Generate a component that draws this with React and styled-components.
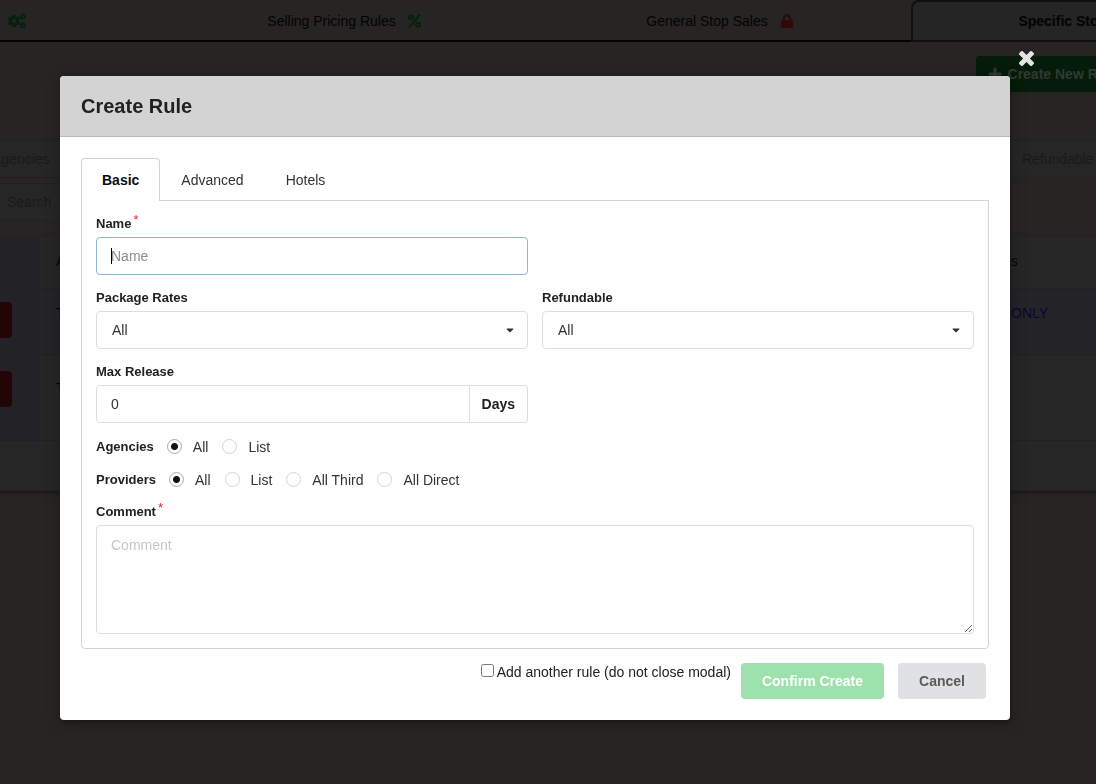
import React, { useState } from "react";
import styled, { createGlobalStyle } from "styled-components";
import { FaCaretDown, FaCogs, FaLock } from "react-icons/fa";

const GlobalStyle = createGlobalStyle`
  * {
    box-sizing: border-box;
  }

  body {
    margin: 0;
    background: #272523;
    color: #212121;
    font-family: "Liberation Sans", Arial, sans-serif;
    font-size: 14px;
    line-height: 18px;
  }

  button, input, select, textarea {
    font: inherit;
    color: inherit;
  }
`;

const Backdrop = styled.div`
  height: 100vh;
  overflow: hidden;
`;

const Page = styled.main`
  margin: 0 -34px 0 -24px;
  color: #030303;
`;

const PageTabs = styled.nav`
  display: flex;
  height: 42px;
  border-bottom: 2px solid #040404;
`;

const PageTab = styled.a`
  display: flex;
  flex: 0 0 ${(props) => (props.$first ? "183px" : "376px")};
  align-items: center;
  justify-content: ${(props) => (props.$first ? "flex-start" : "center")};
  gap: 12px;
  height: 42px;
  padding: 0 6px 0 ${(props) => (props.$first ? "30px" : "0")};
  color: inherit;
  font-weight: ${(props) => (props.$active ? "700" : "400")};
  text-decoration: none;
  white-space: nowrap;
  border: 2px solid ${(props) => (props.$active ? "#101010" : "transparent")};
  border-radius: 8px 8px 0 0;
  background: ${(props) => (props.$active ? "#252525" : "transparent")};

  svg {
    color: ${(props) => props.$icon};
  }
`;

const PageActions = styled.div`
  display: flex;
  justify-content: flex-end;
  padding: 14px 0 48px;
`;

const CreateButton = styled.button`
  display: flex;
  align-items: center;
  gap: 6px;
  height: 36px;
  padding: 0 12px;
  border: 0;
  border-radius: 4px;
  background: #051c0a;
  color: #2f3a31;
  font-weight: 700;
  white-space: nowrap;
`;

const Filters = styled.div`
  display: flex;
  gap: 14px;
  padding-left: ${(props) => (props.$inset ? "15px" : "0")};
  margin-bottom: ${(props) => (props.$inset ? "16px" : "5px")};
`;

const Filter = styled.input`
  flex: ${(props) => props.$flex};
  min-width: 0;
  height: 38px;
  padding: 0 15px;
  border: 1px solid #222120;
  border-radius: 4px;
  background: #262626;

  &::placeholder {
    color: #1a1a1a;
    opacity: 1;
  }
`;

const RuleTable = styled.table`
  width: 100%;
  table-layout: fixed;
  border-collapse: collapse;
  background: #262626;
  box-shadow: 0 2px 4px #1a1918;

  th, td {
    border-bottom: 1px solid #212121;
    font-weight: 400;
    text-align: left;
    vertical-align: top;
  }
`;

const RuleRow = styled.tr`
  height: ${(props) => props.$height};
  background: ${(props) => (props.$tinted ? "#242428" : "transparent")};

  th, td {
    padding: ${(props) => props.$pad || "15px"} 16px 0;
  }
`;

const HeadCell = styled.th`
  width: ${(props) => props.$width || "auto"};
  background: ${(props) => (props.$actions ? "#232327" : "transparent")};
`;

const NoteCell = styled.td`
  && {
    padding-left: 24px;
  }

  color: #070733;
`;

const ActionCell = styled.td`
  && {
    padding: ${(props) => props.$top} 0 0;
  }

  background: #232327;
`;

const DeleteButton = styled.button`
  display: block;
  width: 36px;
  height: 36px;
  border: 0;
  border-radius: 4px;
  background: #230505;
`;

const Overlay = styled.div`
  position: fixed;
  inset: 0;
  overflow: auto;
  padding: 76px 86px 64px 60px;
`;

const Modal = styled.section`
  position: relative;
  border-radius: 4px;
  background: #fff;
  box-shadow: 1px 3px 3px 0 rgba(0, 0, 0, 0.2), 1px 3px 15px 2px rgba(0, 0, 0, 0.2);
`;

const CloseButton = styled.button`
  position: absolute;
  top: -25px;
  right: -24px;
  display: flex;
  padding: 0;
  border: 0;
  background: none;
  color: #e4e4e4;
`;

const ModalHeader = styled.h2`
  margin: 0;
  padding: 18px 21px;
  border-bottom: 1px solid #b8b8b8;
  border-radius: 4px 4px 0 0;
  background: #d3d3d3;
  font-size: 20px;
  line-height: 24px;
`;

const ModalBody = styled.form`
  padding: 21px;
`;

const Tabs = styled.div`
  display: flex;
`;

const Tab = styled.button`
  height: 43px;
  margin-bottom: -1px;
  padding: 0 20px;
  border: 1px solid ${(props) => (props.$active ? "#d4d4d5" : "transparent")};
  border-bottom: 0;
  border-radius: 4px 4px 0 0;
  background: ${(props) => (props.$active ? "#fff" : "transparent")};
  color: ${(props) => (props.$active ? "#0d0d0d" : "#333")};
  font-weight: ${(props) => (props.$active ? "700" : "400")};
  z-index: 1;
`;

const Panel = styled.div`
  display: grid;
  grid-template-columns: 1fr 1fr;
  gap: 14px;
  padding: 14px;
  border: 1px solid #d4d4d5;
  border-radius: 0 0 4px 4px;
`;

const Field = styled.div`
  display: flex;
  flex-direction: column;
  gap: 4px;
  grid-column: ${(props) => props.$column || "1"};
`;

const FieldLabel = styled.label`
  display: flex;
  gap: 2px;
  font-size: 13px;
  font-weight: 700;
`;

const Required = styled.span`
  color: #db2828;
  font-weight: 400;
  line-height: 10px;
`;

const TextInput = styled.input`
  flex: 1;
  width: 100%;
  min-width: 0;
  min-height: 38px;
  padding: 0 14px;
  border: 1px solid #dededf;
  border-radius: ${(props) => (props.$labeled ? "4px 0 0 4px" : "4px")};
  background: #fff;
  color: #333;
  outline: 0;

  &::placeholder {
    color: #c7c7c7;
    opacity: 1;
  }

  &:focus {
    border-color: #85b7d9;
  }

  &:focus::placeholder {
    color: #8c8c8c;
  }

  /* steady caret while the focused box is still empty */
  &:focus:placeholder-shown {
    background: linear-gradient(#000, #000) 14px 50% / 1px 16px no-repeat #fff;
    caret-color: transparent;
  }
`;

const LabeledInput = styled.div`
  display: flex;
`;

const Unit = styled.span`
  display: flex;
  align-items: center;
  padding: 0 12px;
  border: 1px solid #dededf;
  border-left: 0;
  border-radius: 0 4px 4px 0;
  font-weight: 700;
`;

const SelectBox = styled.div`
  position: relative;

  svg {
    position: absolute;
    top: 13px;
    right: 12px;
    color: #333;
    pointer-events: none;
  }
`;

const Select = styled.select`
  appearance: none;
  width: 100%;
  height: 38px;
  padding: 0 15px;
  border: 1px solid #dededf;
  border-radius: 4px;
  background: #fff;
  color: #333;
  outline: 0;
`;

const RadioRow = styled.fieldset`
  grid-column: 1 / -1;
  display: flex;
  align-items: center;
  gap: 14px;
  height: 19px;
  margin: 0;
  padding: 0;
  border: 0;
`;

const RadioTitle = styled.span`
  margin-right: -1px;
  font-size: 13px;
  font-weight: 700;
`;

const RadioLabel = styled.label`
  display: flex;
  align-items: center;
  gap: 11px;
  color: #333;
`;

const Radio = styled.input`
  appearance: none;
  width: 15px;
  height: 15px;
  margin: 0;
  border: 1px solid #d4d4d5;
  border-radius: 50%;
  background: #fff;

  &:checked {
    border-color: #aaa;
    background: radial-gradient(circle, #111 3px, #fff 4px);
  }
`;

const TextArea = styled.textarea`
  display: block;
  width: 100%;
  height: 109px;
  padding: 10px 14px;
  border: 1px solid #dededf;
  border-radius: 4px;
  outline: 0;
  resize: vertical;

  &::placeholder {
    color: #c7c7c7;
    opacity: 1;
  }
`;

const Footer = styled.div`
  display: flex;
  justify-content: flex-end;
  gap: 14px;
  padding: 14px 3px 0 0;
`;

const AddAnother = styled.label`
  display: flex;
  align-self: flex-start;
  gap: 3px;
  margin-right: -4px;

  input {
    width: 13px;
    height: 13px;
    margin: 1px 0;
  }
`;

const Button = styled.button`
  height: 36px;
  padding: 0 21px;
  border: 0;
  border-radius: 4px;
  background: ${(props) => (props.$primary ? "#9de1ac" : "#e0e1e2")};
  color: ${(props) => (props.$primary ? "#fff" : "#5a5a5a")};
  font-weight: 700;
`;

const CloseIcon = () => (
  <svg width="15" height="15" viewBox="110 366 1188 1188" fill="currentColor">
    <path d="M1298 1322q0 40-28 68l-136 136q-28 28-68 28t-68-28l-294-294-294 294q-28 28-68 28t-68-28l-136-136q-28-28-28-68t28-68l294-294-294-294q-28-28-28-68t28-68l136-136q28-28 68-28t68 28l294 294 294-294q28-28 68-28t68 28l136 136q28 28 28 68t-28 68l-294 294 294 294q28 28 28 68z" />
  </svg>
);

const PercentIcon = () => (
  <svg width="13" height="14" viewBox="0 0 13 14" fill="none" stroke="currentColor" strokeWidth="2">
    <circle cx="3" cy="3.5" r="2" />
    <circle cx="10" cy="10.5" r="2" />
    <path d="M11.3 1.2L1.7 12.8" strokeLinecap="round" />
  </svg>
);

const PlusIcon = () => (
  <svg width="14" height="14" viewBox="0 0 14 14" stroke="currentColor" strokeWidth="3">
    <path d="M7 2v10M2 7h10" strokeLinecap="round" />
  </svg>
);

const RulesPage = () => (
  <Page>
    <PageTabs>
      <PageTab href="#markups" $first $icon="#05200d" aria-label="Markups">
        <FaCogs size={18} />
      </PageTab>
      <PageTab href="#selling" $icon="#05200d">
        Selling Pricing Rules <PercentIcon />
      </PageTab>
      <PageTab href="#general" $icon="#300808">
        General Stop Sales <FaLock size={14} />
      </PageTab>
      <PageTab href="#specific" $active $icon="#300808">
        Specific Stop Sales <FaLock size={14} />
      </PageTab>
    </PageTabs>
    <PageActions>
      <CreateButton type="button">
        <PlusIcon />
        Create New Rule
      </CreateButton>
    </PageActions>
    <Filters>
      <Filter $flex="1" placeholder="Agencies" aria-label="Agencies" />
      <Filter $flex="0 0 124px" placeholder="Refundable" aria-label="Refundable" />
    </Filters>
    <Filters $inset>
      <Filter $flex="0 0 50%" placeholder="Search" aria-label="Search" />
    </Filters>
    <RuleTable>
      <thead>
        <RuleRow $height="51px">
          <HeadCell $width="64px" $actions />
          <HeadCell>A</HeadCell>
          <HeadCell $width="143px">ns</HeadCell>
        </RuleRow>
      </thead>
      <tbody>
        <RuleRow $height="66px" $tinted>
          <ActionCell $top="13px">
            <DeleteButton type="button" aria-label="Delete" />
          </ActionCell>
          <td>T</td>
          <NoteCell>ONLY</NoteCell>
        </RuleRow>
        <RuleRow $height="86px" $pad="24px">
          <ActionCell $top="16px">
            <DeleteButton type="button" aria-label="Delete" />
          </ActionCell>
          <td>T</td>
          <td />
        </RuleRow>
      </tbody>
      <tfoot>
        <RuleRow $height="50px">
          <td colSpan={3} />
        </RuleRow>
      </tfoot>
    </RuleTable>
  </Page>
);

const SelectField = ({ id, label, column }) => (
  <Field $column={column}>
    <FieldLabel htmlFor={id}>{label}</FieldLabel>
    <SelectBox>
      <Select id={id} defaultValue="all">
        <option value="all">All</option>
        <option value="yes">Yes</option>
        <option value="no">No</option>
      </Select>
      <FaCaretDown size={12} />
    </SelectBox>
  </Field>
);

const RadioGroup = ({ name, title, options }) => {
  const [value, setValue] = useState("All");

  return (
    <RadioRow aria-label={title}>
      <RadioTitle>{title}</RadioTitle>
      {options.map((option) => (
        <RadioLabel key={option}>
          <Radio
            type="radio"
            name={name}
            checked={value === option}
            onChange={() => setValue(option)}
          />
          {option}
        </RadioLabel>
      ))}
    </RadioRow>
  );
};

const App = () => {
  const [tab, setTab] = useState("Basic");

  return (
    <>
      <GlobalStyle />
      <Backdrop>
        <RulesPage />
      </Backdrop>
      <Overlay>
        <Modal role="dialog" aria-labelledby="modal-title">
          <CloseButton type="button" aria-label="Close">
            <CloseIcon />
          </CloseButton>
          <ModalHeader id="modal-title">Create Rule</ModalHeader>
          <ModalBody onSubmit={(e) => e.preventDefault()}>
            <Tabs role="tablist">
              {["Basic", "Advanced", "Hotels"].map((name) => (
                <Tab
                  key={name}
                  type="button"
                  role="tab"
                  aria-selected={tab === name}
                  $active={tab === name}
                  onClick={() => setTab(name)}
                >
                  {name}
                </Tab>
              ))}
            </Tabs>
            <Panel>
              <Field>
                <FieldLabel htmlFor="name">
                  Name<Required>*</Required>
                </FieldLabel>
                <TextInput id="name" placeholder="Name" autoComplete="off" autoFocus />
              </Field>
              <SelectField id="package" label="Package Rates" />
              <SelectField id="refundable" label="Refundable" column="2" />
              <Field>
                <FieldLabel htmlFor="release">Max Release</FieldLabel>
                <LabeledInput>
                  <TextInput id="release" defaultValue="0" $labeled />
                  <Unit>Days</Unit>
                </LabeledInput>
              </Field>
              <RadioGroup name="agencies" title="Agencies" options={["All", "List"]} />
              <RadioGroup
                name="providers"
                title="Providers"
                options={["All", "List", "All Third", "All Direct"]}
              />
              <Field $column="1 / -1">
                <FieldLabel htmlFor="comment">
                  Comment<Required>*</Required>
                </FieldLabel>
                <TextArea id="comment" placeholder="Comment" />
              </Field>
            </Panel>
            <Footer>
              <AddAnother>
                <input type="checkbox" />
                Add another rule (do not close modal)
              </AddAnother>
              <Button type="submit" $primary>
                Confirm Create
              </Button>
              <Button type="button">Cancel</Button>
            </Footer>
          </ModalBody>
        </Modal>
      </Overlay>
    </>
  );
};

export default App;
